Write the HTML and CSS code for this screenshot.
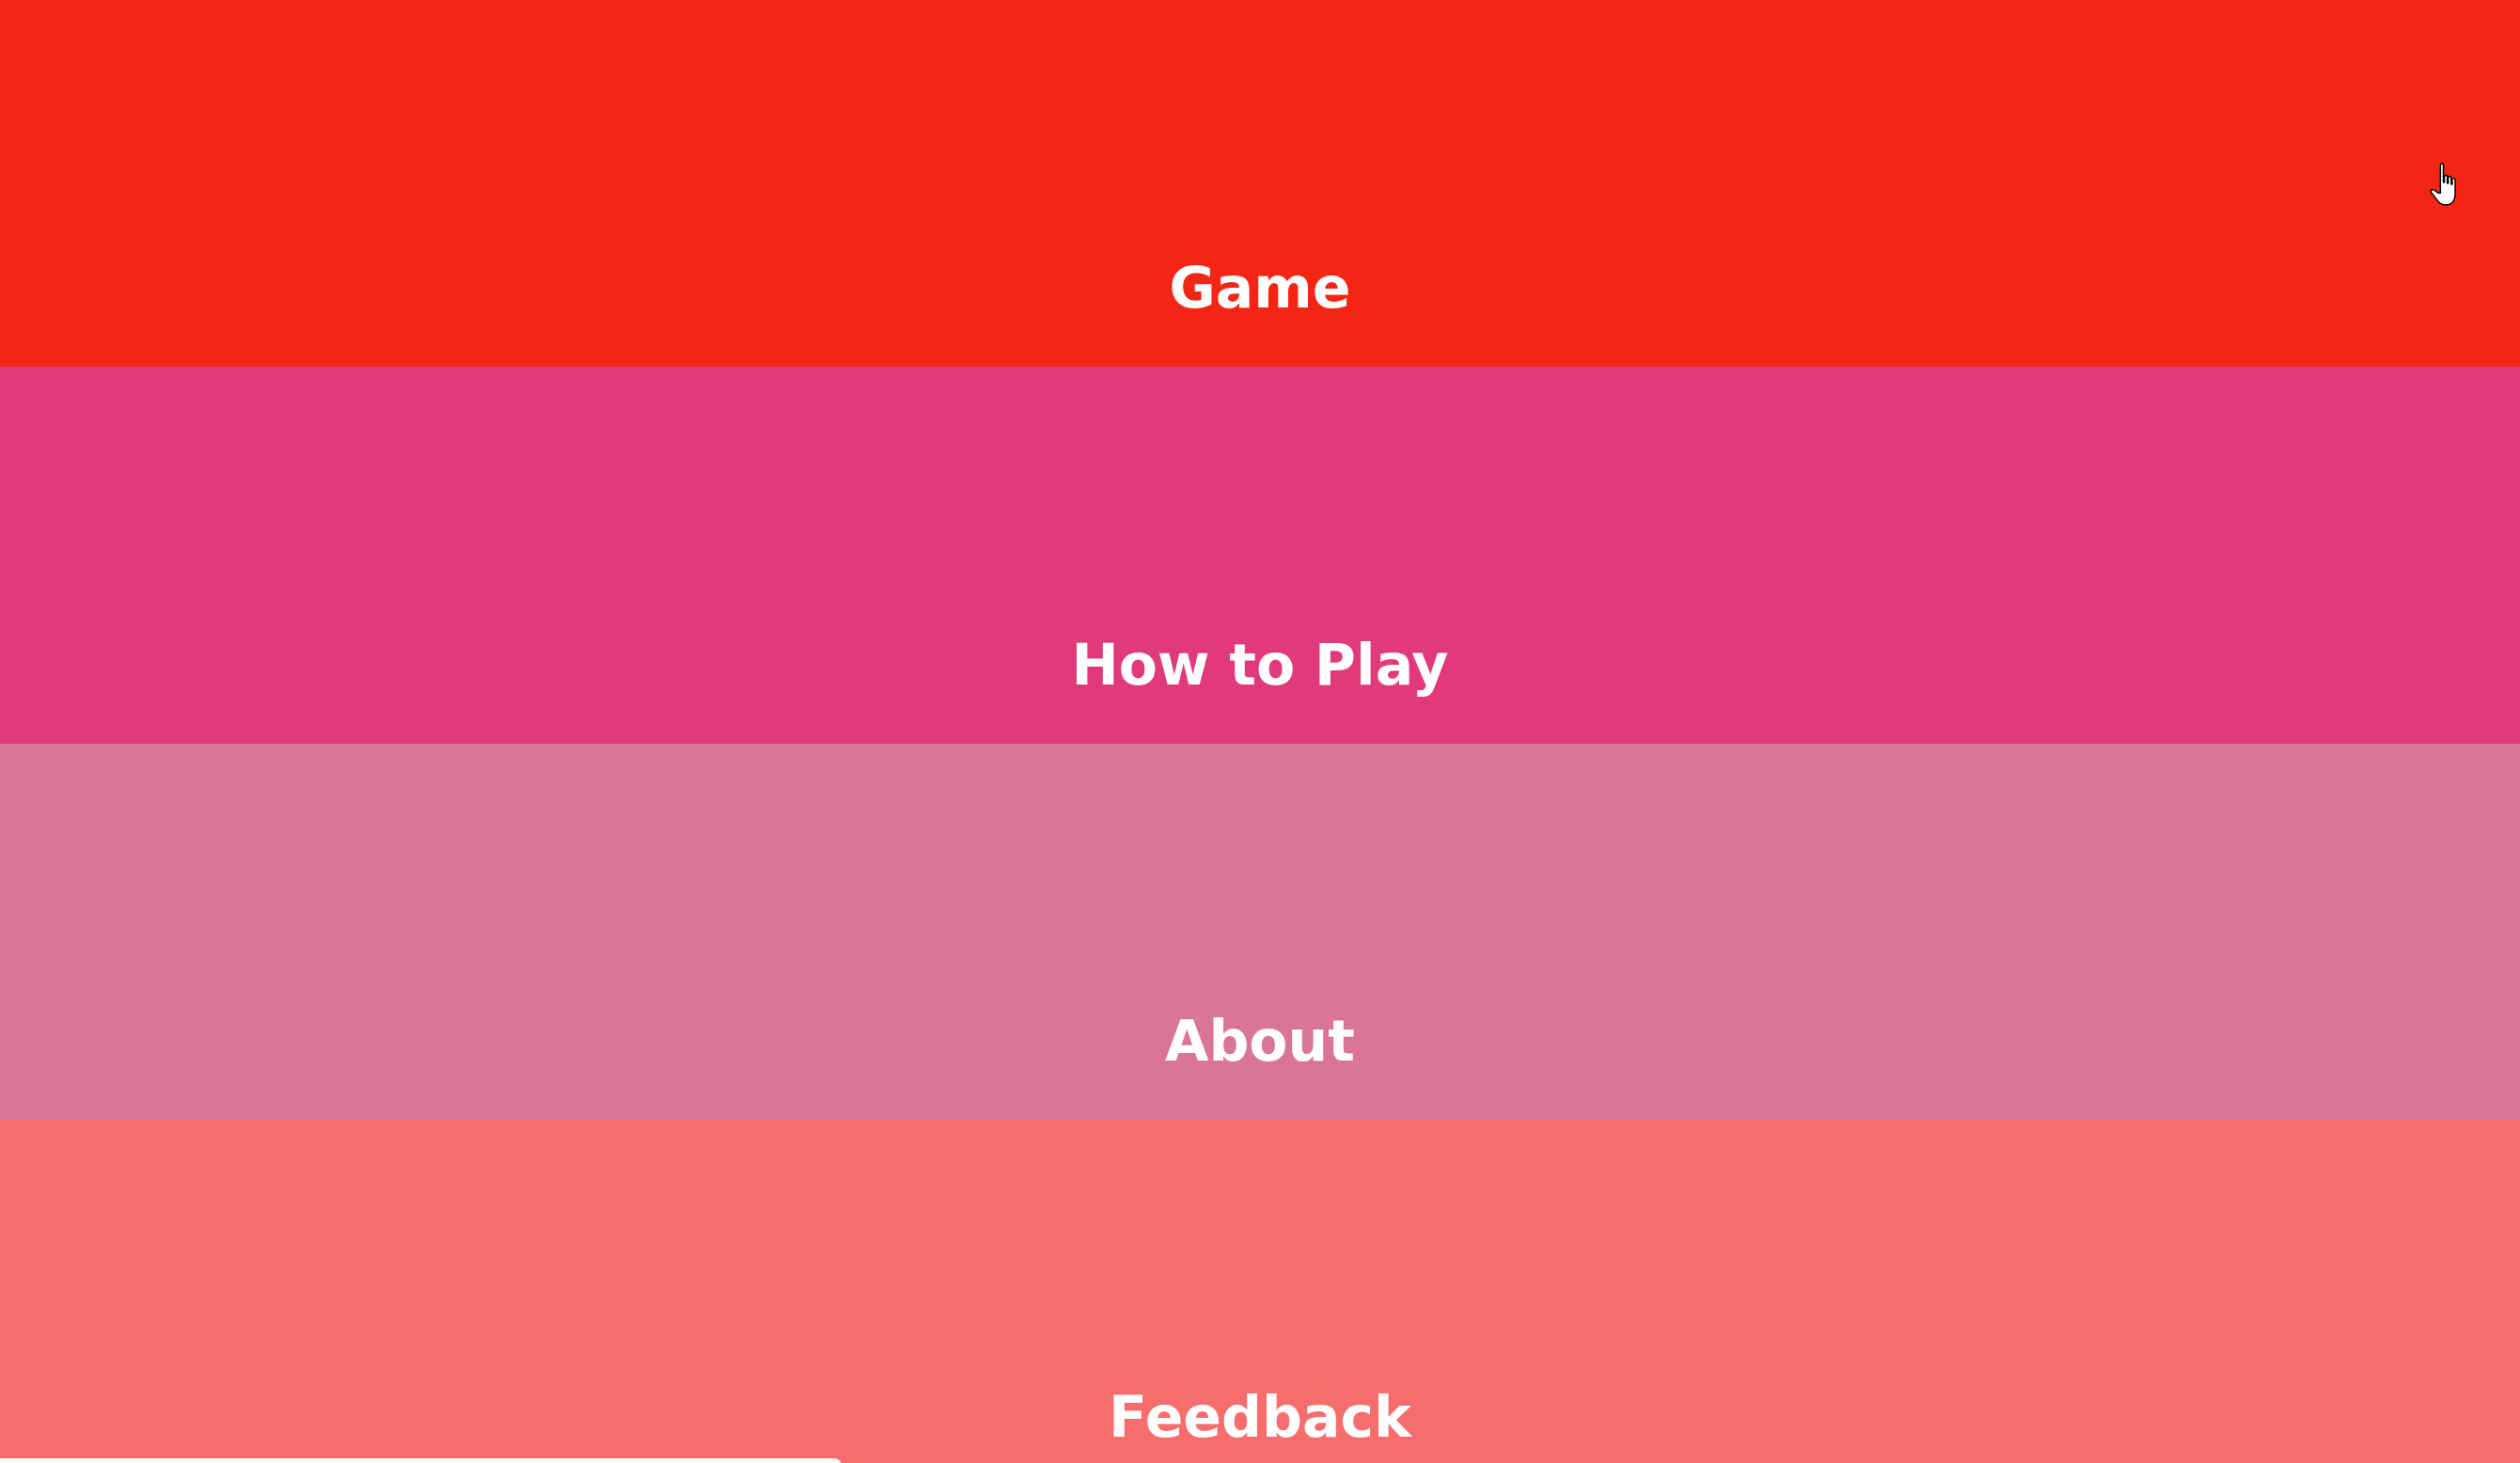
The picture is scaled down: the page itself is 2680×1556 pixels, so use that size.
FILE: index.html
```html
<!DOCTYPE html>
<html>
<head>
<meta charset="utf-8">
<link rel="stylesheet" href="styles.css">
</head>
<body>
<nav class="menu">
  <a class="item item-game" href="#">Game</a>
  <a class="item item-how" href="#">How to Play</a>
  <a class="item item-about" href="#">About</a>
  <a class="item item-feedback" href="#">Feedback</a>
</nav>
<div class="sheet"></div>
<svg class="cursor" width="33" height="48" viewBox="0 0 28 46">
  <path d="M11 3 C11 1.5 14 1.5 14 3 L14 21 L15 21 L15 15 C15 13.5 18 13.5 18 15 L18 22 L19 22 L19 16 C19 14.5 22 14.5 22 16 L22 23 L23 23 L23 18 C23 16.5 26 16.5 26 18 L26 33 C26 40 22 44 16 44 C11 44 9 41 6 37 L1.5 31 C0.5 29.5 2.5 27.5 4 28.5 L9 32 L11 32 Z" fill="#fff" stroke="#000" stroke-width="1.4" stroke-linejoin="round"/>
</svg>
</body>
</html>
```
FILE: styles.css
```css
html, body {
  margin: 0;
  padding: 0;
  height: 100%;
  overflow: hidden;
}
body {
  font-family: "DejaVu Sans", Verdana, sans-serif;
  position: relative;
}
.menu {
  display: flex;
  flex-direction: column;
}
.item {
  display: flex;
  justify-content: center;
  align-items: flex-end;
  height: 400px;
  box-sizing: border-box;
  padding-bottom: 54px;
  color: #fff;
  text-decoration: none;
  font-weight: bold;
  font-size: 60px;
  line-height: 1;
}
.item-game {
  height: 390px;
  background: #f32515;
}
.item-how {
  background: #e03a7c;
  height: 401px;
}
.item-about {
  background: #db7499;
}
.item-feedback {
  background: #f76c6c;
}
.sheet {
  position: absolute;
  left: 0;
  top: 1551px;
  width: 895px;
  height: 40px;
  background: #fff;
  border-top-right-radius: 8px;
}
.cursor {
  position: absolute;
  left: 2582px;
  top: 172px;
}
```
